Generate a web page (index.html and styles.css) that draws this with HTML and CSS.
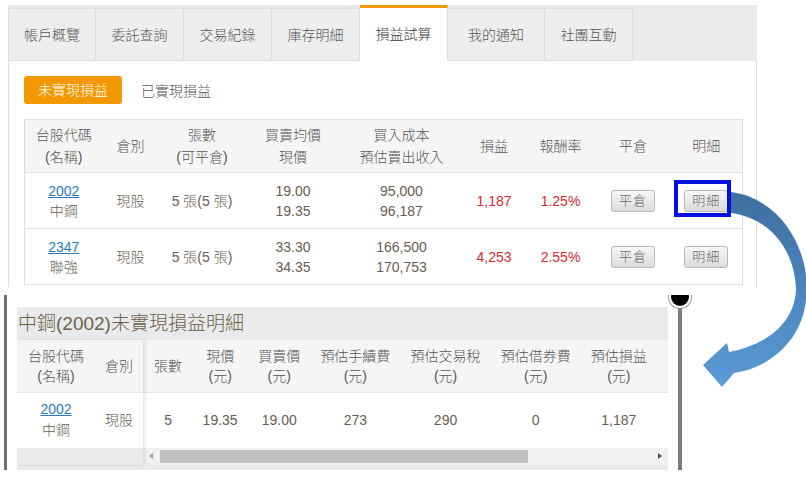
FILE: index.html
```html
<!DOCTYPE html>
<html>
<head>
<meta charset="UTF-8">
<title>損益試算</title>
<link rel="stylesheet" href="styles.css">
</head>
<body>
<div id="canvas">
<section class="shot-top">
  <ul class="tabs">
    <li>帳戶概覽</li>
    <li>委託查詢</li>
    <li>交易紀錄</li>
    <li>庫存明細</li>
    <li class="active">損益試算</li>
    <li class="wide">我的通知</li>
    <li>社團互動</li>
  </ul>
  <div class="panel">
    <div class="subtabs">
      <span class="sub on">未實現損益</span>
      <span class="sub">已實現損益</span>
    </div>
    <table class="pl">
      <colgroup>
        <col style="width:78px"><col style="width:56px"><col style="width:87px"><col style="width:95px"><col style="width:122px">
        <col style="width:63px"><col style="width:70px"><col style="width:75px"><col style="width:72px">
      </colgroup>
      <thead>
        <tr>
          <th>台股代碼<br>(名稱)</th>
          <th>倉別</th>
          <th>張數<br>(可平倉)</th>
          <th>買賣均價<br>現價</th>
          <th>買入成本<br>預估賣出收入</th>
          <th>損益</th>
          <th>報酬率</th>
          <th>平倉</th>
          <th>明細</th>
        </tr>
      </thead>
      <tbody>
        <tr>
          <td><a href="#">2002</a><br>中鋼</td>
          <td>現股</td>
          <td>5 張(5 張)</td>
          <td>19.00<br>19.35</td>
          <td>95,000<br>96,187</td>
          <td class="red">1,187</td>
          <td class="red">1.25%</td>
          <td><button class="btn">平倉</button></td>
          <td><button class="btn">明細</button></td>
        </tr>
        <tr>
          <td><a href="#">2347</a><br>聯強</td>
          <td>現股</td>
          <td>5 張(5 張)</td>
          <td>33.30<br>34.35</td>
          <td>166,500<br>170,753</td>
          <td class="red">4,253</td>
          <td class="red">2.55%</td>
          <td><button class="btn">平倉</button></td>
          <td><button class="btn">明細</button></td>
        </tr>
      </tbody>
    </table>
  </div>
</section>

<section class="shot-modal">
  <span class="close"></span>
  <div class="modal-body">
    <h2>中鋼(2002)未實現損益明細</h2>
    <div class="grid">
      <div class="fixed">
        <table class="dt">
          <colgroup><col style="width:78px"><col style="width:48px"></colgroup>
          <thead><tr><th>台股代碼<br>(名稱)</th><th>倉別</th></tr></thead>
          <tbody><tr><td><a href="#">2002</a><br>中鋼</td><td>現股</td></tr></tbody>
        </table>
      </div>
      <div class="scroller">
        <table class="dt">
          <colgroup>
            <col style="width:50px"><col style="width:54px"><col style="width:64px"><col style="width:88px">
            <col style="width:92px"><col style="width:88px"><col style="width:78px"><col style="width:10px">
          </colgroup>
          <thead>
            <tr>
              <th>張數</th>
              <th>現價<br>(元)</th>
              <th>買賣價<br>(元)</th>
              <th>預估手續費<br>(元)</th>
              <th>預估交易稅<br>(元)</th>
              <th>預估借券費<br>(元)</th>
              <th>預估損益<br>(元)</th>
              <th></th>
            </tr>
          </thead>
          <tbody>
            <tr>
              <td>5</td>
              <td>19.35</td>
              <td>19.00</td>
              <td>273</td>
              <td>290</td>
              <td>0</td>
              <td>1,187</td>
              <td></td>
            </tr>
          </tbody>
        </table>
        <div class="hbar">
          <span class="arr left"></span>
          <span class="track"><span class="thumb"></span></span>
          <span class="arr right"></span>
        </div>
      </div>
    </div>
  </div>
</section>

<svg class="annot" width="806" height="479" viewBox="0 0 806 479">
  <defs>
    <linearGradient id="arrowFill" x1="0" y1="192" x2="0" y2="387" gradientUnits="userSpaceOnUse">
      <stop offset="0" stop-color="#3f6e9f"/>
      <stop offset="0.55" stop-color="#4d87c0"/>
      <stop offset="1" stop-color="#5b9bd5"/>
    </linearGradient>
  </defs>
  <rect x="676" y="182" width="53" height="33" fill="none" stroke="#0010e0" stroke-width="4"/>
  <path fill="url(#arrowFill)" d="M731 192 C780 198 812 250 806 300 C802 340 770 368 734 373 L722 387 L703 365 L727 343 L729 352 C765 345 794 325 796 290 C795 250 770 218 731 213 Z"/>
</svg>
</div>
</body>
</html>
```

FILE: styles.css
```css
*{margin:0;padding:0;box-sizing:border-box}
body{background:#fff;font-family:"Liberation Sans","Noto Sans CJK TC",sans-serif;font-size:14px;font-weight:300;color:#555}
#canvas{position:relative;width:806px;height:479px;overflow:hidden}

/* top screenshot */
.shot-top{margin-left:8px;padding-top:5px;width:749px}
.tabs{display:flex;align-items:flex-end;height:56px;background:#e9eaec;list-style:none}
.tabs li{width:88px;height:53px;line-height:52px;text-align:center;background:#eee;border:1px solid #ddd;border-left:none;color:#555}
.tabs li:first-child{border-left:1px solid #ddd}
.tabs li.wide{width:97px}
.tabs li.active{height:56px;background:#fff;border-top:3px solid #f39800;border-bottom:none;color:#333;line-height:52px}
.panel{height:226px;border-left:1px solid #ddd;border-right:1px solid #ddd;padding:15px 14px 0 15px}
.subtabs{display:flex;align-items:center;height:28px}
.sub{color:#555}
.sub.on{width:98px;height:28px;line-height:28px;text-align:center;background:#f39800;color:#fff;border-radius:3px;margin-right:19px}

.pl{width:718px;border-collapse:collapse;margin-top:15px;table-layout:fixed}
.pl th,.pl td{border-top:1px solid #ddd;border-bottom:1px solid #ddd;text-align:center;vertical-align:middle}
.pl{border:1px solid #ddd}
.pl th{height:53px;background:#f5f5f5;font-weight:300;line-height:22px;color:#555}
.pl td{height:56px;line-height:20px;color:#685d51}
.pl a,.dt a{color:#2a7abf;text-decoration:underline}
.pl td.red{color:#dd2a2e}
.btn{width:44px;height:22px;border:1px solid #b9b9b9;border-radius:3px;background:linear-gradient(#f7f7f7,#dcdcdc);font-family:inherit;font-size:13px;font-weight:300;letter-spacing:1px;color:#666;line-height:18px}

/* modal screenshot */
.shot-modal{position:relative;margin:8px 0 0 4px;width:678px;height:175px;border-left:3px solid #6f6f6f;border-right:4px solid #7d7d7d;padding:12px 10px 0;clip-path:inset(0 -30px 0 -30px)}
.close{position:absolute;right:-13px;top:-9px;width:22px;height:22px;border-radius:50%;background:#000;border:2px solid #fff;box-shadow:0 0 0 1px #999}
.modal-body{height:163px;background:#e9eaec}
.modal-body h2{height:33px;line-height:33px;font-size:19px;font-weight:300;color:#6d5f48;padding-left:1px}
.grid{display:flex}
.fixed{width:126px;position:relative;z-index:1;box-shadow:2px 0 3px rgba(0,0,0,.10)}
.scroller{flex:1}
.dt{width:100%;border-collapse:collapse;table-layout:fixed}
.dt th{height:52px;background:#f5f5f5;font-weight:300;line-height:20px;color:#555;text-align:center}
.dt td{height:56px;background:#fff;line-height:21px;color:#685d51;text-align:center;border-top:1px solid #e6e6e6}
.hbar{display:flex;align-items:center;height:17px;background:#f1f1f1}
.arr{width:17px;height:17px;position:relative}
.arr::after{content:"";position:absolute;top:5px;border-top:3.5px solid transparent;border-bottom:3.5px solid transparent}
.arr.left::after{left:6px;border-right:4px solid #a3a3a3}
.arr.right::after{left:7px;border-left:4px solid #505050}
.track{flex:1;height:17px;padding-top:2px}
.thumb{display:block;width:368px;height:13px;background:#c1c1c1}

.annot{position:absolute;left:0;top:0;pointer-events:none}
```
